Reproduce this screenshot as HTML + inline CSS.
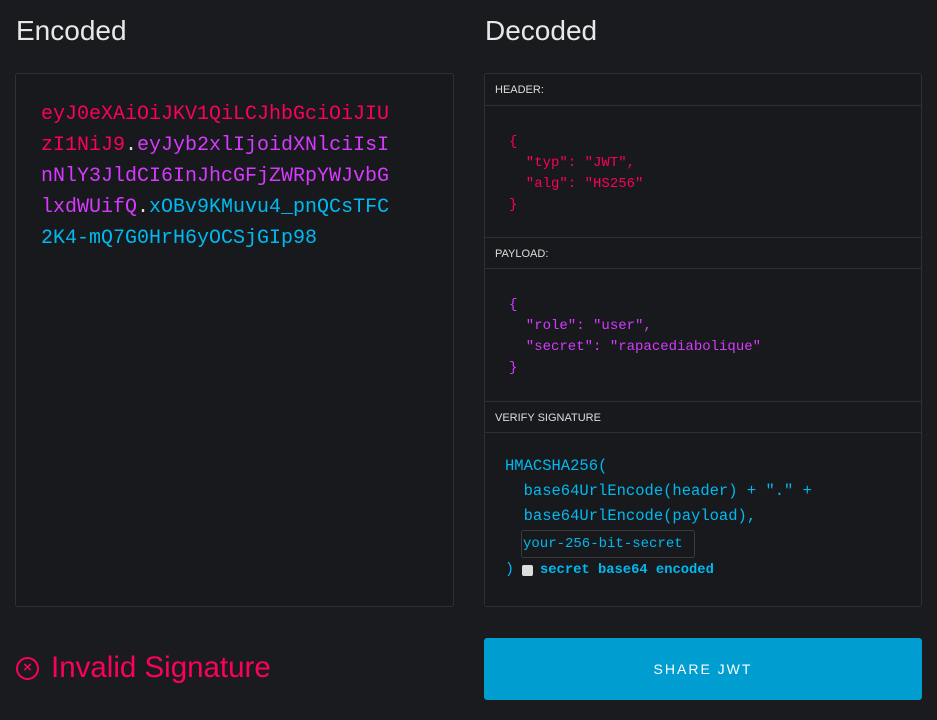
<!DOCTYPE html>
<html><head><meta charset="utf-8"><style>
*{margin:0;padding:0;box-sizing:border-box}
body{width:937px;height:720px;background:#1a1b1e;position:relative;overflow:hidden;font-family:"Liberation Sans",sans-serif}
.h1{position:absolute;top:15px;font-size:28px;color:#e8e8e8}
.box{position:absolute;border:1px solid #2f3034;background:#18191c;border-radius:3px}
.mono{font-family:"Liberation Mono",monospace}
.r{color:#fb015b}.m{color:#d63aff}.c{color:#00b9f1}.w{color:#ddd}
.bar{position:absolute;left:0;right:0;height:32px;border-bottom:1px solid #2f3034;font-size:11px;color:#ddd;padding:10px 0 0 10px}
.bar.t{border-top:1px solid #2f3034}
.j{position:absolute;left:24px;font-size:14px;line-height:21px;white-space:pre}
.v{position:absolute;left:20px;font-size:15.5px;line-height:25px;white-space:pre}
</style></head><body>
<div class="h1" style="left:16px">Encoded</div>
<div class="h1" style="left:485px">Decoded</div>
<div class="box" style="left:15px;top:73px;width:439px;height:534px">
<div class="mono" style="position:absolute;left:25px;top:25px;font-size:20px;line-height:31px;white-space:pre"><span class="r">eyJ0eXAiOiJKV1QiLCJhbGciOiJIU</span>
<span class="r">zI1NiJ9</span><span class="w">.</span><span class="m">eyJyb2xlIjoidXNlciIsI</span>
<span class="m">nNlY3JldCI6InJhcGFjZWRpYWJvbG</span>
<span class="m">lxdWUifQ</span><span class="w">.</span><span class="c">xOBv9KMuvu4_pnQCsTFC</span>
<span class="c">2K4-mQ7G0HrH6yOCSjGIp98</span></div>
</div>
<div class="box" style="left:484px;top:73px;width:438px;height:534px">
<div class="bar" style="top:0">HEADER:</div>
<div class="j mono r" style="top:58px">{
  "typ": "JWT",
  "alg": "HS256"
}</div>
<div class="bar t" style="top:163px">PAYLOAD:</div>
<div class="j mono m" style="top:221px">{
  "role": "user",
  "secret": "rapacediabolique"
}</div>
<div class="bar t" style="top:327px">VERIFY SIGNATURE</div>
<div class="v mono c" style="top:380px">HMACSHA256(
  base64UrlEncode(header) + "." +
  base64UrlEncode(payload),</div>
<div class="mono c" style="position:absolute;left:36px;top:456px;width:174px;height:28px;border:1px solid #3a3b3f;border-radius:3px;font-size:14px;padding:5px 0 0 1px">your-256-bit-secret</div>
<div class="mono c" style="position:absolute;left:20px;top:486px;font-size:15px;line-height:20px">)</div>
<div style="position:absolute;left:37px;top:491px;width:11px;height:11px;background:#ddd;border-radius:2px"></div>
<div class="mono c" style="position:absolute;left:55px;top:487px;font-size:13.8px;line-height:20px;font-weight:bold">secret base64 encoded</div>
</div>
<div style="position:absolute;left:16px;top:657px;width:23px;height:23px;border:2px solid #fb015b;border-radius:50%;color:#fb015b;font-size:15px;line-height:18px;text-align:center;font-weight:bold">×</div>
<div style="position:absolute;left:51px;top:651px;font-size:29.5px;color:#fb015b">Invalid Signature</div>
<div style="position:absolute;left:484px;top:638px;width:438px;height:62px;background:#009dd0;border-radius:3px;color:#fff;font-size:14px;letter-spacing:2px;text-align:center;line-height:62px">SHARE JWT</div>
</body></html>
